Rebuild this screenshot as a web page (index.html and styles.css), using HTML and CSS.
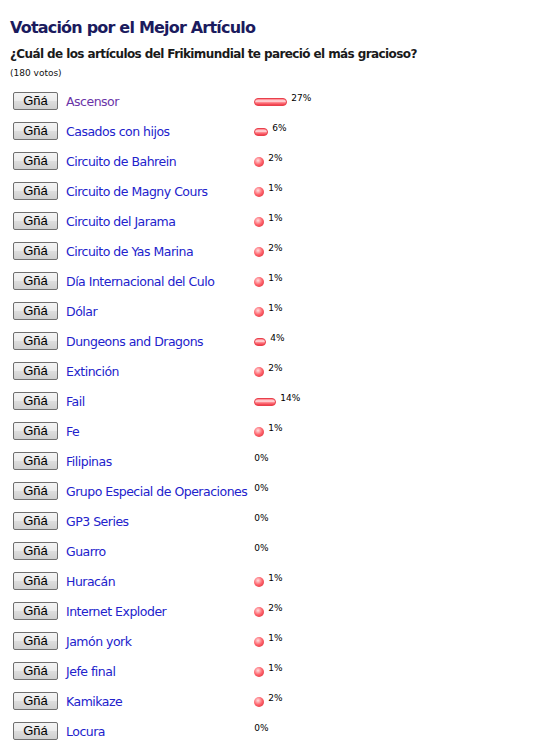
FILE: index.html
```html
<!DOCTYPE html>
<html lang="es">
<head>
<meta charset="utf-8">
<title>Votación</title>
<link rel="stylesheet" href="styles.css">
</head>
<body>
<div class="poll">
  <h2 class="title">Votación por el Mejor Artículo</h2>
  <h3 class="question">¿Cuál de los artículos del Frikimundial te pareció el más gracioso?</h3>
  <div class="total">(180 votos)</div>
  <table class="options">
    <tr><td><div class="opt"><button class="btn">Gñá</button><a class="link visited" href="#">Ascensor</a></div></td><td><div class="res"><span class="bar" style="width:33px"></span><span class="pct">27%</span></div></td></tr>
    <tr><td><div class="opt"><button class="btn">Gñá</button><a class="link" href="#">Casados con hijos</a></div></td><td><div class="res"><span class="bar" style="width:14px"></span><span class="pct">6%</span></div></td></tr>
    <tr><td><div class="opt"><button class="btn">Gñá</button><a class="link" href="#">Circuito de Bahrein</a></div></td><td><div class="res"><span class="bar ball"></span><span class="pct">2%</span></div></td></tr>
    <tr><td><div class="opt"><button class="btn">Gñá</button><a class="link" href="#">Circuito de Magny Cours</a></div></td><td><div class="res"><span class="bar ball"></span><span class="pct">1%</span></div></td></tr>
    <tr><td><div class="opt"><button class="btn">Gñá</button><a class="link" href="#">Circuito del Jarama</a></div></td><td><div class="res"><span class="bar ball"></span><span class="pct">1%</span></div></td></tr>
    <tr><td><div class="opt"><button class="btn">Gñá</button><a class="link" href="#">Circuito de Yas Marina</a></div></td><td><div class="res"><span class="bar ball"></span><span class="pct">2%</span></div></td></tr>
    <tr><td><div class="opt"><button class="btn">Gñá</button><a class="link" href="#">Día Internacional del Culo</a></div></td><td><div class="res"><span class="bar ball"></span><span class="pct">1%</span></div></td></tr>
    <tr><td><div class="opt"><button class="btn">Gñá</button><a class="link" href="#">Dólar</a></div></td><td><div class="res"><span class="bar ball"></span><span class="pct">1%</span></div></td></tr>
    <tr><td><div class="opt"><button class="btn">Gñá</button><a class="link" href="#">Dungeons and Dragons</a></div></td><td><div class="res"><span class="bar" style="width:12px"></span><span class="pct">4%</span></div></td></tr>
    <tr><td><div class="opt"><button class="btn">Gñá</button><a class="link" href="#">Extinción</a></div></td><td><div class="res"><span class="bar ball"></span><span class="pct">2%</span></div></td></tr>
    <tr><td><div class="opt"><button class="btn">Gñá</button><a class="link" href="#">Fail</a></div></td><td><div class="res"><span class="bar" style="width:22px"></span><span class="pct">14%</span></div></td></tr>
    <tr><td><div class="opt"><button class="btn">Gñá</button><a class="link" href="#">Fe</a></div></td><td><div class="res"><span class="bar ball"></span><span class="pct">1%</span></div></td></tr>
    <tr><td><div class="opt"><button class="btn">Gñá</button><a class="link" href="#">Filipinas</a></div></td><td><div class="res"><span class="pct">0%</span></div></td></tr>
    <tr><td><div class="opt"><button class="btn">Gñá</button><a class="link" href="#">Grupo Especial de Operaciones</a></div></td><td><div class="res"><span class="pct">0%</span></div></td></tr>
    <tr><td><div class="opt"><button class="btn">Gñá</button><a class="link" href="#">GP3 Series</a></div></td><td><div class="res"><span class="pct">0%</span></div></td></tr>
    <tr><td><div class="opt"><button class="btn">Gñá</button><a class="link" href="#">Guarro</a></div></td><td><div class="res"><span class="pct">0%</span></div></td></tr>
    <tr><td><div class="opt"><button class="btn">Gñá</button><a class="link" href="#">Huracán</a></div></td><td><div class="res"><span class="bar ball"></span><span class="pct">1%</span></div></td></tr>
    <tr><td><div class="opt"><button class="btn">Gñá</button><a class="link" href="#">Internet Exploder</a></div></td><td><div class="res"><span class="bar ball"></span><span class="pct">2%</span></div></td></tr>
    <tr><td><div class="opt"><button class="btn">Gñá</button><a class="link" href="#">Jamón york</a></div></td><td><div class="res"><span class="bar ball"></span><span class="pct">1%</span></div></td></tr>
    <tr><td><div class="opt"><button class="btn">Gñá</button><a class="link" href="#">Jefe final</a></div></td><td><div class="res"><span class="bar ball"></span><span class="pct">1%</span></div></td></tr>
    <tr><td><div class="opt"><button class="btn">Gñá</button><a class="link" href="#">Kamikaze</a></div></td><td><div class="res"><span class="bar ball"></span><span class="pct">2%</span></div></td></tr>
    <tr><td><div class="opt"><button class="btn">Gñá</button><a class="link" href="#">Locura</a></div></td><td><div class="res"><span class="pct">0%</span></div></td></tr>
  </table>
</div>
</body>
</html>
```

FILE: styles.css
```css
html, body {
  margin: 0;
  padding: 0;
  background: #ffffff;
}
body {
  font-family: "DejaVu Sans", Verdana, sans-serif;
  color: #111;
}
.poll {
  padding: 17px 0 0 10px;
}
.title {
  margin: 0;
  font-size: 16px;
  line-height: 21px;
  font-weight: bold;
  color: #1b1b5e;
  letter-spacing: -0.8px;
}
.question {
  margin: 8px 0 0 0;
  font-size: 12px;
  line-height: 16px;
  font-weight: bold;
  color: #1a1a1a;
  letter-spacing: -0.6px;
}
.total {
  margin-top: 6px;
  font-size: 9px;
  line-height: 11px;
  color: #111;
}
.options {
  border-collapse: collapse;
  margin-top: 7px;
}
.options td {
  padding: 0;
  vertical-align: middle;
}
.opt {
  display: flex;
  align-items: center;
  gap: 8px;
  height: 30px;
  padding-left: 3px;
  padding-right: 7px;
}
.btn {
  width: 45px;
  height: 18px;
  padding: 0;
  margin: 0;
  border: 1px solid #707070;
  border-radius: 2px;
  background: linear-gradient(to bottom, #f4f4f4 0%, #ebebeb 48%, #dddddd 52%, #cfcfcf 100%);
  font-family: "Liberation Sans", Arial, sans-serif;
  font-size: 13px;
  line-height: 16px;
  color: #000;
}
.link {
  font-family: "DejaVu Sans", Tahoma, sans-serif;
  font-size: 12.5px;
  color: #2222cc;
  text-decoration: none;
  letter-spacing: -0.5px;
  white-space: nowrap;
}
.link.visited {
  color: #6a34a8;
}
.res {
  display: flex;
  align-items: center;
  gap: 4px;
  height: 30px;
  white-space: nowrap;
}
.bar {
  display: block;
  box-sizing: border-box;
  height: 8px;
  border-radius: 4px;
  border: 1px solid #e8404c;
  background: linear-gradient(to bottom, #ff7a82 0%, #ffe6e8 35%, #ff8088 60%, #f03a46 100%);
  position: relative;
  top: 1px;
}
.bar.ball {
  width: 10px;
  height: 10px;
  border: none;
  border-radius: 50%;
  background: radial-gradient(circle at 40% 35%, #ffe0e2 0%, #ff6a72 45%, #d81e2a 100%);
  top: 1px;
}
.pct {
  display: block;
  font-size: 9px;
  line-height: 10px;
  color: #000;
  position: relative;
  top: -3px;
}
```
